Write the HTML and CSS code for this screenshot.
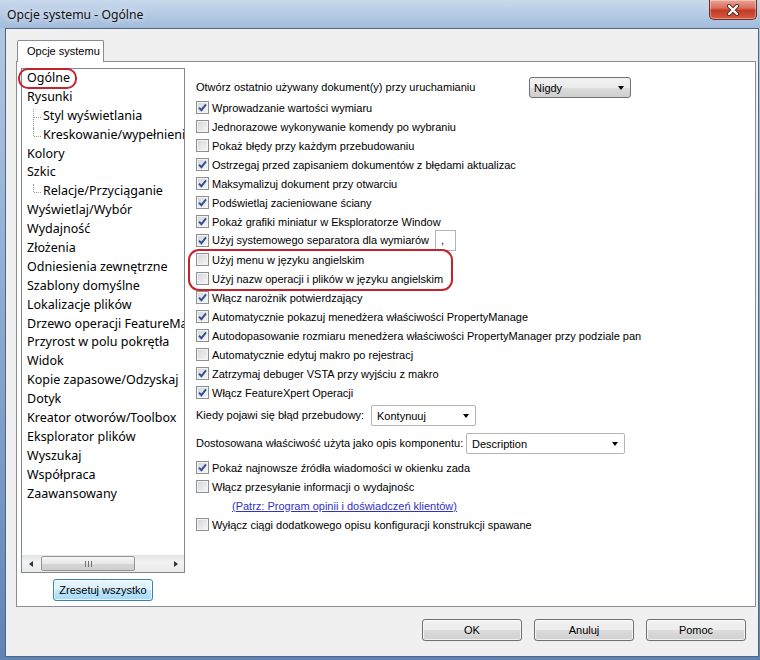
FILE: index.html
```
<!DOCTYPE html>
<html lang="pl">
<head>
<meta charset="utf-8">
<title>Opcje systemu - Ogólne</title>
<link rel="stylesheet" href="styles.css">
</head>
<body>
<div class="window">
  <div class="titlebar">
    <span class="title">Opcje systemu - Ogólne</span>
    <div class="close">
      <svg width="18" height="12" viewBox="0 0 18 12"><path d="M5 2 L13 10 M13 2 L5 10" stroke="#5a2a22" stroke-width="4.2" stroke-linecap="round"/><path d="M5 2 L13 10 M13 2 L5 10" stroke="#ffffff" stroke-width="2.4" stroke-linecap="round"/></svg>
    </div>
  </div>
  <div class="client">
    <div class="tabstrip"><div class="tab">Opcje systemu</div></div>
    <div class="panel">
      <div class="leftcol">
        <div class="tree">
          <ul class="tree-items">
            <li>Ogólne</li>
            <li>Rysunki</li>
            <li class="child mid">Styl wyświetlania</li>
            <li class="child">Kreskowanie/wypełnienie</li>
            <li>Kolory</li>
            <li>Szkic</li>
            <li class="child">Relacje/Przyciąganie</li>
            <li>Wyświetlaj/Wybór</li>
            <li>Wydajność</li>
            <li>Złożenia</li>
            <li>Odniesienia zewnętrzne</li>
            <li>Szablony domyślne</li>
            <li>Lokalizacje plików</li>
            <li>Drzewo operacji FeatureManager</li>
            <li>Przyrost w polu pokrętła</li>
            <li>Widok</li>
            <li>Kopie zapasowe/Odzyskaj</li>
            <li>Dotyk</li>
            <li>Kreator otworów/Toolbox</li>
            <li>Eksplorator plików</li>
            <li>Wyszukaj</li>
            <li>Współpraca</li>
            <li>Zaawansowany</li>
          </ul>
          <div class="hscroll">
            <span class="sbtn"><i class="tri-left"></i></span>
            <div class="track"><div class="thumb"><span class="grip"></span><span class="grip"></span><span class="grip"></span></div></div>
            <span class="sbtn"><i class="tri-right"></i></span>
          </div>
        </div>
        <button class="btn btn-hot reset">Zresetuj wszystko</button>
      </div>

      <div class="rightcol">
        <div class="row row-combo">
          <span class="lbl lbl-open">Otwórz ostatnio używany dokument(y) przy uruchamianiu</span>
          <div class="combo combo-gray combo-nigdy">Nigdy<i class="caret"></i></div>
        </div>
        <div class="row"><span class="cb on"><svg width="11" height="11" viewBox="0 0 11 11"><path d="M2 5.6 L4.4 8.2 L9 2.4" fill="none" stroke="#31508f" stroke-width="1.9"/></svg></span>Wprowadzanie wartości wymiaru</div>
        <div class="row"><span class="cb"></span>Jednorazowe wykonywanie komendy po wybraniu</div>
        <div class="row"><span class="cb"></span>Pokaż błędy przy każdym przebudowaniu</div>
        <div class="row"><span class="cb on"><svg width="11" height="11" viewBox="0 0 11 11"><path d="M2 5.6 L4.4 8.2 L9 2.4" fill="none" stroke="#31508f" stroke-width="1.9"/></svg></span>Ostrzegaj przed zapisaniem dokumentów z błędami aktualizac</div>
        <div class="row"><span class="cb on"><svg width="11" height="11" viewBox="0 0 11 11"><path d="M2 5.6 L4.4 8.2 L9 2.4" fill="none" stroke="#31508f" stroke-width="1.9"/></svg></span>Maksymalizuj dokument przy otwarciu</div>
        <div class="row"><span class="cb on"><svg width="11" height="11" viewBox="0 0 11 11"><path d="M2 5.6 L4.4 8.2 L9 2.4" fill="none" stroke="#31508f" stroke-width="1.9"/></svg></span>Podświetlaj zacieniowane ściany</div>
        <div class="row"><span class="cb on"><svg width="11" height="11" viewBox="0 0 11 11"><path d="M2 5.6 L4.4 8.2 L9 2.4" fill="none" stroke="#31508f" stroke-width="1.9"/></svg></span>Pokaż grafiki miniatur w Eksploratorze Window</div>
        <div class="row"><span class="cb on"><svg width="11" height="11" viewBox="0 0 11 11"><path d="M2 5.6 L4.4 8.2 L9 2.4" fill="none" stroke="#31508f" stroke-width="1.9"/></svg></span><span class="lbl lbl-sep">Użyj systemowego separatora dla wymiarów</span><span class="sepbox">,</span></div>
        <div class="row"><span class="cb"></span>Użyj menu w języku angielskim</div>
        <div class="row"><span class="cb"></span>Użyj nazw operacji i plików w języku angielskim</div>
        <div class="row"><span class="cb on"><svg width="11" height="11" viewBox="0 0 11 11"><path d="M2 5.6 L4.4 8.2 L9 2.4" fill="none" stroke="#31508f" stroke-width="1.9"/></svg></span>Włącz narożnik potwierdzający</div>
        <div class="row"><span class="cb on"><svg width="11" height="11" viewBox="0 0 11 11"><path d="M2 5.6 L4.4 8.2 L9 2.4" fill="none" stroke="#31508f" stroke-width="1.9"/></svg></span>Automatycznie pokazuj menedżera właściwości PropertyManage</div>
        <div class="row"><span class="cb on"><svg width="11" height="11" viewBox="0 0 11 11"><path d="M2 5.6 L4.4 8.2 L9 2.4" fill="none" stroke="#31508f" stroke-width="1.9"/></svg></span>Autodopasowanie rozmiaru menedżera właściwości PropertyManager przy podziale pan</div>
        <div class="row"><span class="cb"></span>Automatycznie edytuj makro po rejestracj</div>
        <div class="row"><span class="cb on"><svg width="11" height="11" viewBox="0 0 11 11"><path d="M2 5.6 L4.4 8.2 L9 2.4" fill="none" stroke="#31508f" stroke-width="1.9"/></svg></span>Zatrzymaj debuger VSTA przy wyjściu z makro</div>
        <div class="row"><span class="cb on"><svg width="11" height="11" viewBox="0 0 11 11"><path d="M2 5.6 L4.4 8.2 L9 2.4" fill="none" stroke="#31508f" stroke-width="1.9"/></svg></span>Włącz FeatureXpert Operacji</div>

        <div class="row row-combo row-kiedy">
          <span class="lbl lbl-kiedy">Kiedy pojawi się błąd przebudowy:</span>
          <div class="combo combo-white combo-kont">Kontynuuj<i class="caret"></i></div>
        </div>
        <div class="row row-combo row-dost">
          <span class="lbl lbl-dost">Dostosowana właściwość użyta jako opis komponentu:</span>
          <div class="combo combo-white combo-desc">Description<i class="caret"></i></div>
        </div>

        <div class="row row-gap"><span class="cb on"><svg width="11" height="11" viewBox="0 0 11 11"><path d="M2 5.6 L4.4 8.2 L9 2.4" fill="none" stroke="#31508f" stroke-width="1.9"/></svg></span>Pokaż najnowsze źródła wiadomości w okienku zada</div>
        <div class="row"><span class="cb"></span>Włącz przesyłanie informacji o wydajnośc</div>
        <div class="row row-link"><a class="link" href="#">(Patrz: Program opinii i doświadczeń klientów)</a></div>
        <div class="row"><span class="cb"></span>Wyłącz ciągi dodatkowego opisu konfiguracji konstrukcji spawane</div>
      </div>

      <div class="mark mark-ogolne"></div>
      <div class="mark mark-lang"></div>
    </div>
    <div class="footer">
      <button class="btn">OK</button>
      <button class="btn">Anuluj</button>
      <button class="btn">Pomoc</button>
    </div>
  </div>
</div>
</body>
</html>
```

FILE: styles.css
```
* { box-sizing: border-box; }
html, body { margin: 0; padding: 0; }
body {
  width: 760px;
  height: 660px;
  overflow: hidden;
  font-family: "Liberation Sans", Arial, sans-serif;
  font-size: 11px;
  color: #000;
}

.window {
  width: 760px;
  height: 660px;
  display: flex;
  flex-direction: column;
  background: linear-gradient(180deg, #b6cae2 0%, #9ab5d8 30%, #7b9ac6 70%, #5f83b6 100%);
}

.titlebar {
  height: 28px;
  flex: none;
  display: flex;
  align-items: flex-start;
  padding-left: 7px;
  background: linear-gradient(180deg, #c9d9ec 0%, #b8cce5 45%, #a1bbdb 100%);
}
.title {
  font-family: "Noto Sans", "Open Sans", sans-serif;
  font-size: 12.2px;
  line-height: 29px;
  color: #111;
  text-shadow: 0 0 6px rgba(255,255,255,0.9);
}
.close {
  margin-left: auto;
  margin-right: 3px;
  width: 48px;
  height: 20px;
  border: 1px solid #6d2b22;
  border-top: none;
  border-radius: 0 0 5px 5px;
  background: linear-gradient(180deg, #eaa596 0%, #dc7160 40%, #c43b25 55%, #d55a43 100%);
  box-shadow: inset 0 0 0 1px rgba(255,255,255,0.35);
  display: flex;
  align-items: center;
  justify-content: center;
}

.client {
  flex: 1;
  margin: 0 1px 3px 5px;
  border: 1px solid #4f6580;
  background: #f0f0f0;
  display: flex;
  flex-direction: column;
}

.tabstrip {
  height: 32px;
  flex: none;
  padding: 11px 0 0 11px;
}
.tab {
  position: relative;
  z-index: 1;
  width: 87px;
  height: 22px;
  border: 1px solid #898c95;
  border-bottom: none;
  border-radius: 2px 2px 0 0;
  background: #fff;
  padding-left: 9px;
  line-height: 21px;
}

.panel {
  position: relative;
  height: 546px;
  flex: none;
  margin: 0 2px 0 10px;
  border: 1px solid #898c95;
  background: #fff;
  display: flex;
  padding: 6px 0 0 4px;
}

.leftcol {
  width: 164px;
  flex: none;
  display: flex;
  flex-direction: column;
}
.tree {
  height: 505px;
  border: 1px solid #828790;
  display: flex;
  flex-direction: column;
  background: #fff;
}
.tree-items {
  flex: 1;
  list-style: none;
  margin: 0;
  padding: 0 0 0 5px;
  overflow: hidden;
  font-family: "Noto Sans", "Open Sans", sans-serif;
  font-size: 12.5px;
  color: #000;
}
.tree-items li {
  height: 18.9px;
  line-height: 18.9px;
  white-space: nowrap;
}
.tree-items li.child {
  position: relative;
  padding-left: 16px;
}
.tree-items li.child::before {
  content: "";
  position: absolute;
  left: 6px;
  top: 2px;
  height: 8px;
  border-left: 1px dotted #9a9a9a;
}
.tree-items li.child.mid::before { height: 19px; }
.tree-items li.child::after {
  content: "";
  position: absolute;
  left: 7px;
  top: 10px;
  width: 7px;
  border-top: 1px dotted #9a9a9a;
}

.hscroll {
  height: 17px;
  flex: none;
  display: flex;
  align-items: center;
  background: linear-gradient(180deg, #e3e3e3 0%, #f2f2f2 40%, #eaeaea 100%);
}
.sbtn {
  width: 17px;
  height: 17px;
  display: flex;
  align-items: center;
  justify-content: center;
}
.tri-left {
  width: 0; height: 0;
  border-top: 3.5px solid transparent;
  border-bottom: 3.5px solid transparent;
  border-right: 4px solid #333;
}
.tri-right {
  width: 0; height: 0;
  border-top: 3.5px solid transparent;
  border-bottom: 3.5px solid transparent;
  border-left: 4px solid #333;
}
.track { flex: 1; height: 17px; display: flex; align-items: center; }
.thumb {
  margin-left: 2px;
  width: 94px;
  height: 15px;
  border: 1px solid #979797;
  border-radius: 2px;
  background: linear-gradient(180deg, #f4f4f4 0%, #e8e8e8 50%, #d6d6d6 51%, #cfcfcf 100%);
  display: flex;
  align-items: center;
  justify-content: center;
  gap: 2px;
}
.grip { width: 1px; height: 6px; background: #6f6f6f; }

.btn {
  font-family: "Liberation Sans", Arial, sans-serif;
  font-size: 11px;
  color: #000;
  width: 100px;
  height: 22px;
  padding: 0;
  border: 1px solid #707070;
  border-radius: 3px;
  background: linear-gradient(180deg, #f2f2f2 0%, #ebebeb 50%, #dddddd 51%, #cfcfcf 100%);
  box-shadow: inset 0 0 0 1px rgba(255,255,255,0.7);
}
.btn-hot {
  border-color: #3c7fb1;
  background: linear-gradient(180deg, #eaf6fd 0%, #d9f0fc 50%, #bee6fd 51%, #a7d9f5 100%);
}
.reset {
  margin-top: 6px;
  margin-left: 32px;
}

.rightcol {
  flex: 1;
  margin-left: 11px;
  padding-top: 9px;
  display: flex;
  flex-direction: column;
  min-width: 0;
}
.row {
  height: 19px;
  flex: none;
  display: flex;
  align-items: center;
  white-space: nowrap;
}
.row-combo { height: 21px; }
.row-kiedy { margin-top: 3px; }
.row-dost { margin-top: 7px; }
.row-gap { margin-top: 4px; }
.row-link { padding-left: 36px; }

.lbl { flex: none; overflow: hidden; white-space: nowrap; line-height: 19px; }
.lbl-open { width: 333px; }
.lbl-kiedy { width: 175px; }
.lbl-dost { width: 270px; }
.lbl-sep { width: 217px; margin-right: 6px; }

.cb {
  width: 13px;
  height: 13px;
  flex: none;
  margin-right: 3px;
  border: 1px solid #8e8f8f;
  background: linear-gradient(135deg, #cfd3d8 0%, #e4e5e7 45%, #f7f7f7 100%);
  box-shadow: inset 0 0 0 1px #f4f4f4;
  display: flex;
  align-items: center;
  justify-content: center;
}
.cb svg { display: block; }

.combo {
  height: 21px;
  flex: none;
  display: flex;
  align-items: center;
  border-radius: 3px;
}
.combo-gray {
  border: 1px solid #707070;
  background: linear-gradient(180deg, #f2f2f2 0%, #ebebeb 50%, #dddddd 51%, #cfcfcf 100%);
  padding-left: 4px;
}
.combo-white {
  border: 1px solid #b4b4b4;
  border-radius: 2px;
  background: #fff;
  padding-left: 5px;
}
.combo-nigdy { width: 102px; }
.combo-kont { width: 105px; }
.combo-desc { width: 159px; }
.caret {
  margin-left: auto;
  margin-right: 6px;
  width: 0; height: 0;
  border-left: 3.5px solid transparent;
  border-right: 3.5px solid transparent;
  border-top: 4px solid #000;
}

.sepbox {
  width: 21px;
  height: 21px;
  flex: none;
  border: 1px solid #b4b4b4;
  background: #fff;
  padding-left: 5px;
  line-height: 19px;
}

.link {
  color: #3131c6;
  text-decoration: underline;
}

.mark {
  position: absolute;
  border: 2px solid #c4232c;
  border-radius: 10px;
  pointer-events: none;
}
.mark-ogolne { left: 1px; top: 6px; width: 59px; height: 21px; }
.mark-lang { left: 171px; top: 187px; width: 265px; height: 42px; border-radius: 11px; }

.footer {
  flex: 1;
  display: flex;
  justify-content: flex-end;
  gap: 12px;
  padding: 12px 12px 0 0;
}
```
